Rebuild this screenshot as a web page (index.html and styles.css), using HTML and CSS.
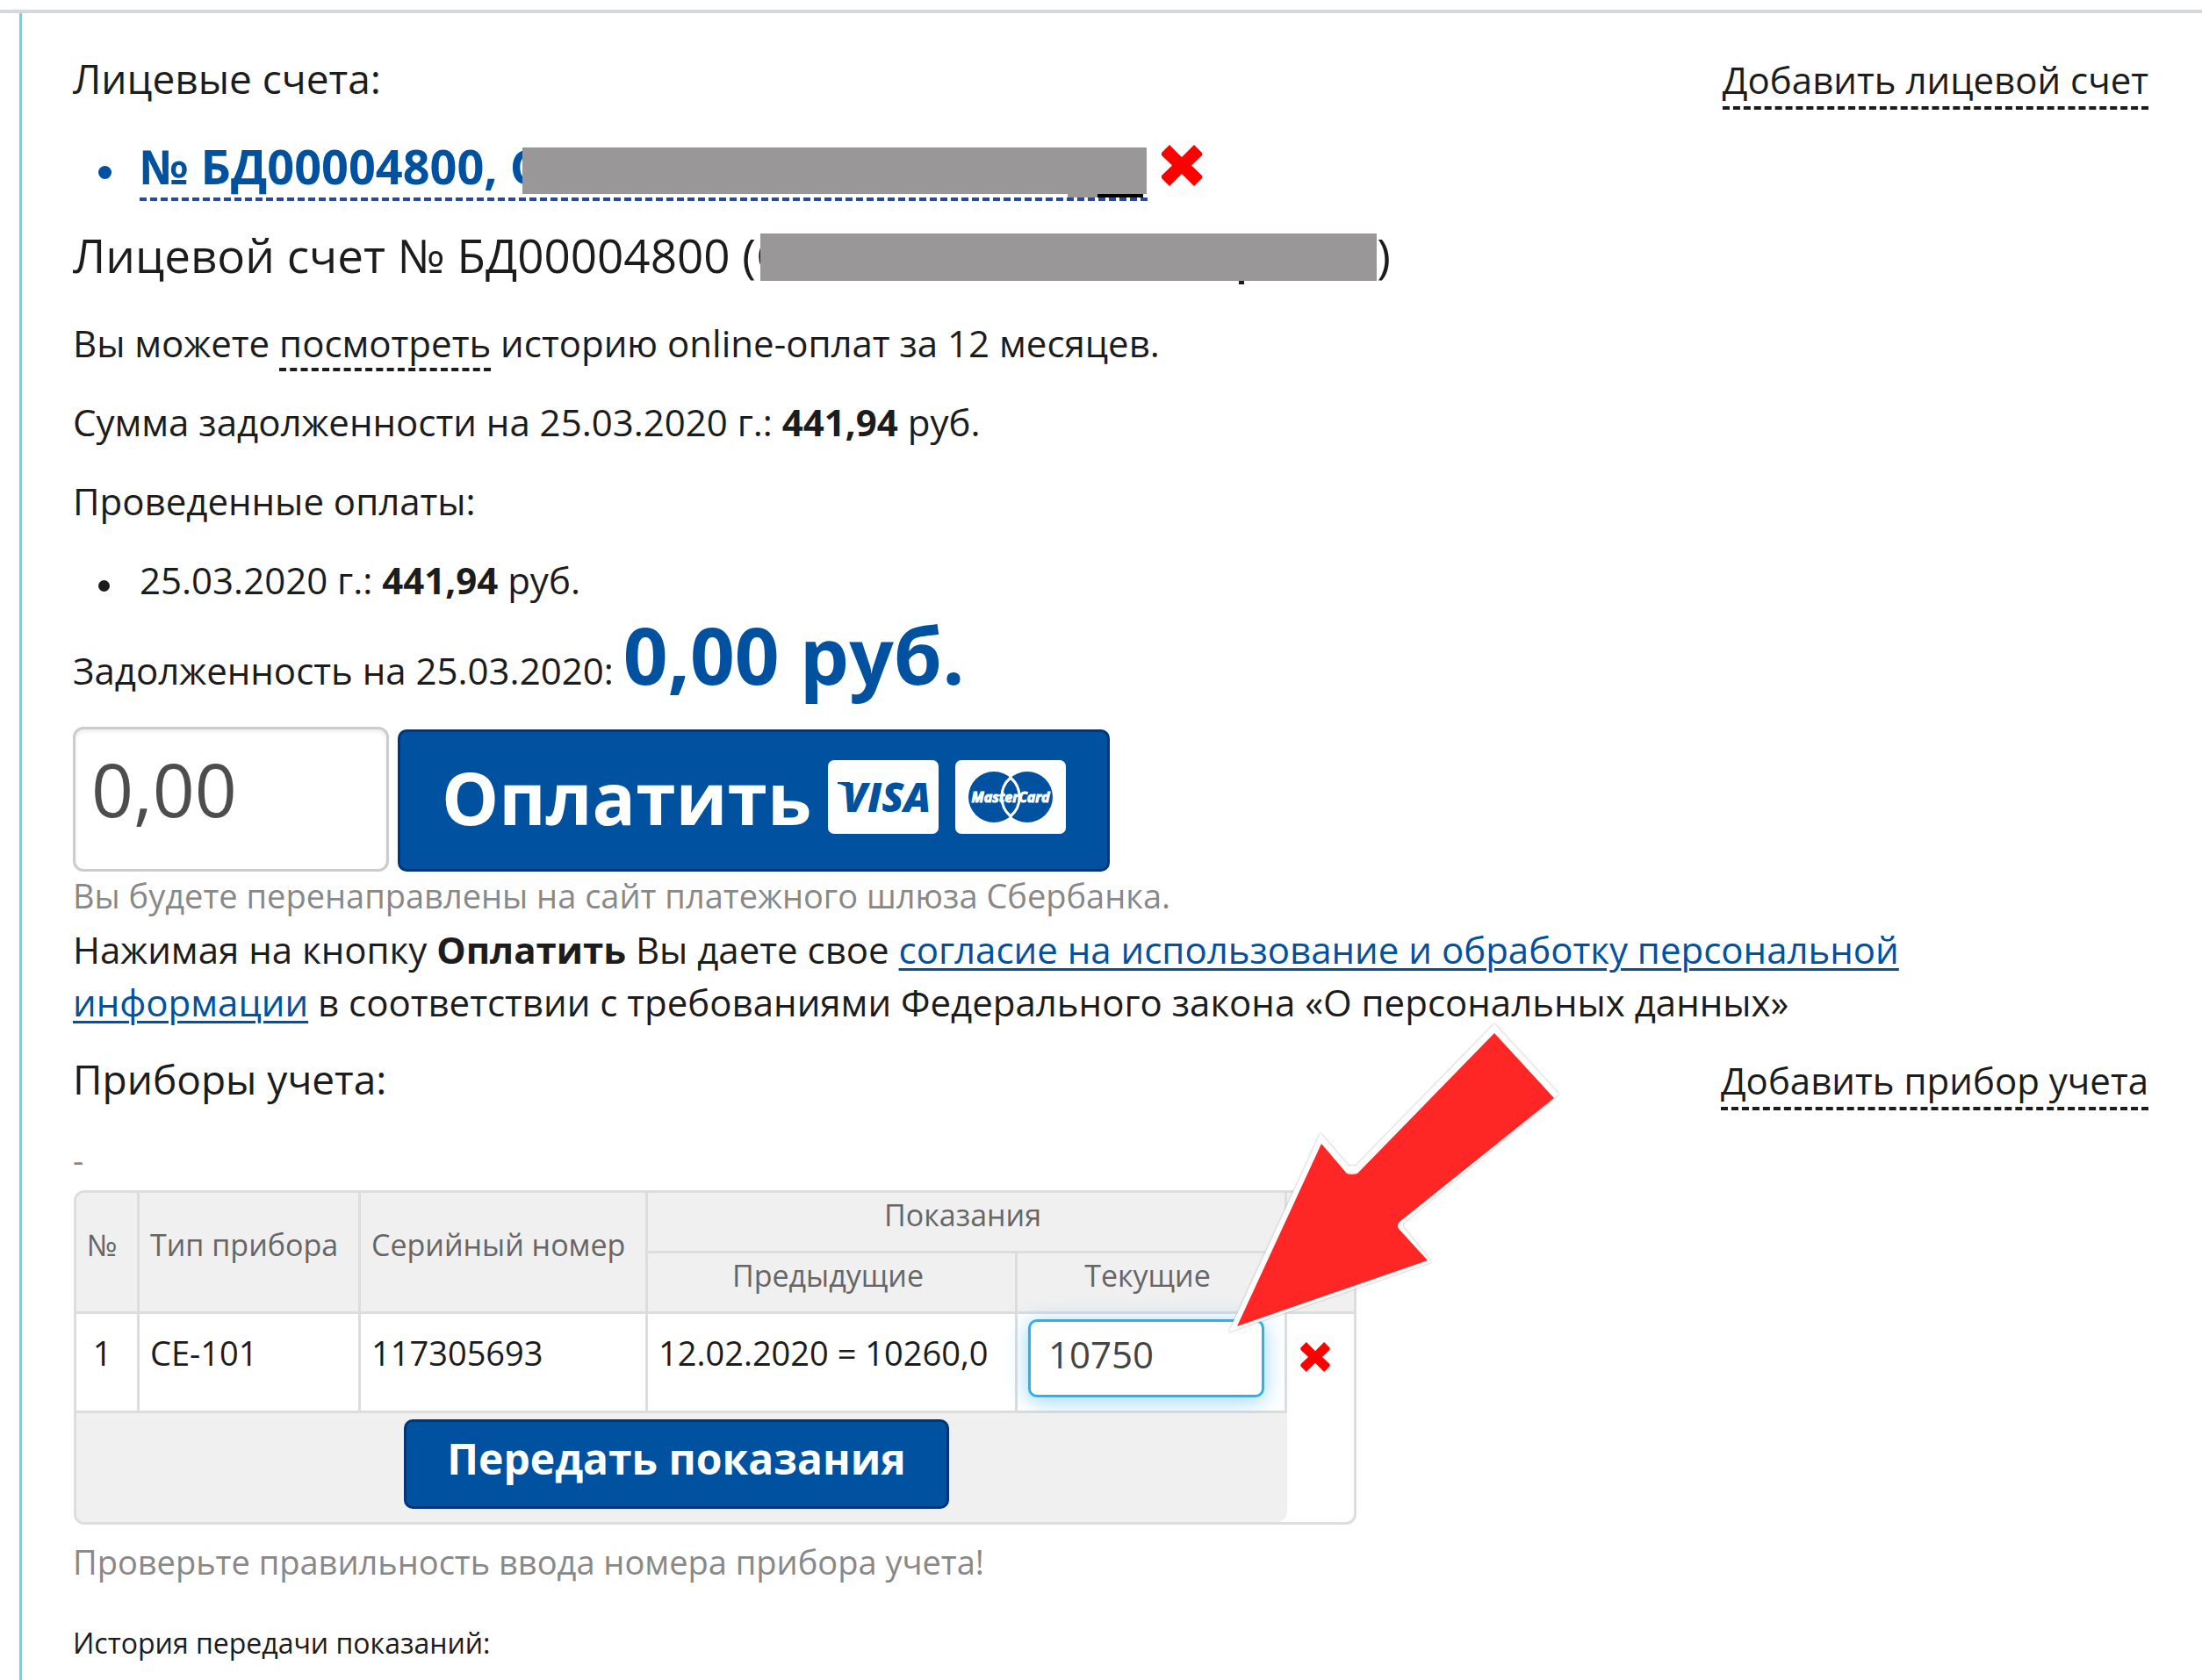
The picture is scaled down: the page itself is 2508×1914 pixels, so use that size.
FILE: index.html
```
<!DOCTYPE html>
<html lang="ru">
<head>
<meta charset="utf-8">
<title>Лицевой счет</title>
<link rel="stylesheet" href="styles.css">
</head>
<body>
<header class="topbar"></header>
<main class="cabinet">
  <section class="accounts">
    <div class="section-head">
      <h2 class="section-title">Лицевые счета:</h2>
      <a class="dashed-link" href="#add-account">Добавить лицевой счет</a>
    </div>
    <ul class="list account-list">
      <li class="list-item account-item">
        <a class="account-link" href="#account">№ БД00004800, С<span class="mask mask-link"></span></a>
        <button class="icon-button" type="button" aria-label="Удалить лицевой счет">
          <svg class="cross cross-large" viewBox="0 0 46 47"><path d="M9 0 0 9v3l12 11.500L0 35v3l9 9 14-14 14 14 9-9v-3L34 23.500 46 12V9L37 0 23 14z"/></svg>
        </button>
      </li>
    </ul>
    <h1 class="account-title">Лицевой счет № БД00004800 (С<span class="mask mask-title"></span>)</h1>
    <p class="text">Вы можете <a class="dashed-link" href="#history">посмотреть</a> историю online-оплат за 12 месяцев.</p>
    <p class="text">Сумма задолженности на 25.03.2020 г.: <b>441,94</b> руб.</p>
    <p class="text">Проведенные оплаты:</p>
    <ul class="list">
      <li class="list-item text">25.03.2020 г.: <b>441,94</b> руб.</li>
    </ul>
    <p class="debt"><label for="sum">Задолженность на 25.03.2020:</label> <strong class="debt-sum">0,00 руб.</strong></p>
  </section>

  <form class="payment">
    <div class="payment-row">
      <input class="sum-input" id="sum" type="text" value="0,00">
      <button class="button pay-button" type="button">
        <span>Оплатить</span>
        <svg class="card" viewBox="0 0 126 84" role="img" aria-label="VISA">
          <rect width="126" height="84" rx="7" fill="#fff"/>
          <text class="visa" x="67" y="59" text-anchor="middle">VISA</text>
          <path d="M11 25h14l5 17c-4-8-10-14-19-15z" fill="#0052a0"/>
        </svg>
        <svg class="card" viewBox="0 0 126 84" role="img" aria-label="MasterCard">
          <rect width="126" height="84" rx="7" fill="#fff"/>
          <circle cx="44" cy="42" r="29" fill="#0052a0"/>
          <circle cx="82" cy="42" r="29" fill="#0052a0"/>
          <path d="M63 20a29 29 0 0 0 0 44 29 29 0 0 0 0-44z" fill="#0052a0" stroke="#fff" stroke-width="3"/>
          <text class="mastercard" x="63" y="48" text-anchor="middle">MasterCard</text>
        </svg>
      </button>
    </div>
    <p class="hint">Вы будете перенаправлены на сайт платежного шлюза Сбербанка.</p>
    <p class="consent">Нажимая на кнопку <b>Оплатить</b> Вы даете свое <a class="link" href="#consent">согласие на использование и обработку персональной информации</a> в соответствии с требованиями Федерального закона «О персональных данных»</p>
  </form>

  <section class="meters">
    <div class="section-head">
      <h2 class="section-title">Приборы учета:</h2>
      <a class="dashed-link" href="#add-meter">Добавить прибор учета</a>
    </div>
    <p class="hint meter-address">-</p>
    <form>
      <table class="meter-table">
        <colgroup>
          <col class="col-number"><col class="col-type"><col class="col-serial">
          <col class="col-previous"><col class="col-current"><col class="col-action">
        </colgroup>
        <thead>
          <tr>
            <th class="tall" rowspan="2" scope="col">№</th>
            <th class="tall" rowspan="2" scope="col">Тип прибора</th>
            <th class="tall" rowspan="2" scope="col">Серийный номер</th>
            <th class="group" colspan="2" scope="colgroup">Показания</th>
            <td class="head-action" rowspan="2"></td>
          </tr>
          <tr>
            <th class="group" scope="col">Предыдущие</th>
            <th class="group" scope="col" id="current">Текущие</th>
          </tr>
        </thead>
        <tbody>
          <tr class="reading">
            <td class="number">1</td>
            <td>СЕ-101</td>
            <td>117305693</td>
            <td>12.02.2020 = 10260,0</td>
            <td class="current"><input class="reading-input" type="text" value="10750" aria-labelledby="current"></td>
            <td class="action" rowspan="2">
              <button class="icon-button" type="button" aria-label="Удалить прибор">
                <svg class="cross cross-small" viewBox="0 0 46 47"><path d="M9 0 0 9v3l12 11.500L0 35v3l9 9 14-14 14 14 9-9v-3L34 23.500 46 12V9L37 0 23 14z"/></svg>
              </button>
            </td>
          </tr>
          <tr class="submit-row">
            <td class="submit" colspan="5"><button class="button send-button" type="button">Передать показания</button></td>
          </tr>
        </tbody>
      </table>
    </form>
    <p class="hint check-hint">Проверьте правильность ввода номера прибора учета!</p>
    <p class="history">История передачи показаний:</p>
    <svg class="arrow" viewBox="0 0 380 350" aria-hidden="true">
      <path class="arrow-halo" d="M303 2 371 76 195 222v7l30 37L8 341 106 128l29 34h12z"/>
      <path class="arrow-body" d="M303 7 371 81 195 222q-4 4 0 9l32 35L10 341 106 133l29 34q6 2 12 0z"/>
    </svg>
  </section>
</main>
</body>
</html>
```
FILE: styles.css
```
* { box-sizing: border-box; }

body {
  margin: 0;
  background: #fff;
  color: #1c1c1c;
  font: 42px/60px "Open Sans", "Noto Sans", sans-serif;
}

h1, h2, p, ul { margin: 0; padding: 0; font-weight: 400; }
b, strong { font-weight: 700; }
button, input { font-family: inherit; }

.topbar { height: 15px; border-bottom: 4px solid #d6d9dc; }

.cabinet {
  min-height: calc(100vh - 15px);
  margin-left: 22px;
  padding: 44px 61px 16px 58px;
  border-left: 3px solid #8cc8d4;
}

.section-head { display: flex; justify-content: space-between; align-items: baseline; }
.section-title { font-size: 46px; }

.dashed-link { color: inherit; text-decoration: none; border-bottom: 4px dashed #1c1c1c; }
.link { color: #0052a0; text-decoration-thickness: 3px; text-underline-offset: 5px; }

.list { list-style: none; }
.list-item { position: relative; padding-left: 76px; }
.list-item::before {
  content: "";
  position: absolute;
  left: 29px;
  top: 50%;
  width: 13px;
  height: 13px;
  border-radius: 50%;
  background: currentColor;
}

.account-list { margin-top: 32px; }
.account-item { display: flex; gap: 16px; color: #0052a0; }
.account-item::before { width: 15px; height: 15px; margin-top: -4px; }
.account-link {
  display: flex;
  align-items: flex-end;
  padding-bottom: 4px;
  color: #0052a0;
  border-bottom: 4px dashed #2b48a0;
  font-size: 54px;
  font-weight: 700;
  line-height: 64px;
  text-decoration: none;
  white-space: pre;
}
.mask { position: relative; background: #999797; }
.mask-link { width: 711px; height: 53px; margin: 0 1px 0 -20px; }
/* descenders left showing below the masked text */
.mask-link::after {
  content: "";
  position: absolute;
  right: 4px;
  top: 100%;
  width: 86px;
  height: 4px;
  background: linear-gradient(90deg, #999797 34px, #000 34px);
}
.mask-title { display: inline-block; width: 702px; height: 54px; margin-left: -28px; vertical-align: -9px; }
.mask-title::after {
  content: "";
  position: absolute;
  right: 151px;
  top: 100%;
  width: 6px;
  height: 4px;
  background: #1c1c1c;
}

.icon-button { align-self: flex-start; padding: 0; border: 0; background: none; line-height: 0; }
.account-item .icon-button { margin-top: 8px; }
.cross { fill: #f00; }
.cross-large { width: 46px; height: 47px; }
.cross-small { width: 34px; height: 34px; }

.account-title { margin-top: 26px; font-size: 53px; line-height: 72px; }
.text { margin-top: 30px; }
.account-title + .text { margin-top: 34px; }

.debt { margin-top: 5px; line-height: 100px; }
.debt-sum { color: #0052a0; font-size: 89px; }

.payment { margin-top: 14px; }
.payment-row { display: flex; align-items: flex-end; gap: 10px; }
.sum-input {
  width: 360px;
  height: 165px;
  padding: 0 16px 24px 18px;
  border: 3px solid #ccc;
  border-radius: 12px;
  color: #4d4d4d;
  font-size: 84px;
  box-shadow: inset 0 3px 4px #eee;
}
.button {
  border: 3px solid #00357a;
  border-radius: 10px;
  background: #0052a0;
  color: #fff;
  font-weight: 700;
}
.pay-button {
  display: flex;
  align-items: center;
  gap: 19px;
  height: 162px;
  padding: 0 47px 8px;
  font-size: 82px;
}
.card { width: 126px; height: 84px; }
.visa { fill: #0052a0; font: italic 800 46px "Open Sans", sans-serif; }
.mastercard { fill: #fff; stroke: #fff; stroke-width: 1; font: italic 700 16px "Open Sans", sans-serif; }

.hint { color: #888; font-size: 38px; line-height: 54px; }
.consent { margin-top: 5px; max-width: 2150px; }

.meters { position: relative; margin-top: 27px; }
.meter-address { margin-top: 29px; }

.meter-table {
  width: 1461px;
  margin: 8px 0 0 1px;
  table-layout: fixed;
  border: 3px solid #ddd;
  border-radius: 12px;
  border-spacing: 0;
  overflow: hidden;
}
.col-number { width: 72px; }
.col-type { width: 252px; }
.col-serial { width: 327px; }
.col-previous { width: 421px; }
.col-current { width: 307px; }
.col-action { width: 76px; }

.meter-table th, .meter-table td {
  padding: 0;
  border: solid #ddd;
  border-width: 0 3px 3px 0;
  text-align: left;
  vertical-align: top;
  white-space: nowrap;
}
.meter-table th, .meter-table .head-action {
  background: #f0f0f0;
  color: #666;
  font-size: 34px;
  font-weight: 400;
  line-height: 48px;
}
.meter-table .tall { padding: 0 0 18px 12px; vertical-align: middle; }
.meter-table .group { height: 69px; padding: 1px 8px 0 0; text-align: center; }
.meter-table .head-action { border-right: 0; }

.reading { height: 113px; font-size: 38px; line-height: 54px; }
.meter-table .reading td { padding: 17px 0 0 12px; }
.meter-table .reading .number { padding: 17px 10px 0 0; text-align: center; }
.meter-table .reading .current { padding-top: 6px; }
.meter-table .reading .action { padding: 24px 0 0 15px; border: 0; }
.reading-input {
  display: block;
  width: 269px;
  height: 89px;
  padding: 0 20px 10px;
  border: 3px solid #2bb0f2;
  border-radius: 10px;
  color: #444;
  font-size: 42px;
  box-shadow: 0 4px 24px #2bb0f280;
}
.submit-row { height: 124px; }
.meter-table .submit {
  padding: 7px 12px 0 0;
  border: 0;
  border-radius: 0 0 12px 0;
  background: #f0f0f0;
  text-align: center;
}
.send-button {
  display: inline-block;
  height: 102px;
  padding: 0 46px 14px;
  font-size: 48px;
  vertical-align: top;
}

.check-hint { margin-top: 15px; }
.history { margin-top: 44px; font-size: 32px; line-height: 44px; }

.arrow { position: absolute; left: 1316px; top: -29px; width: 380px; height: 350px; overflow: visible; }
.arrow-body { fill: #ff2626; }
.arrow-halo { fill: none; stroke: #fff; stroke-width: 8px; filter: drop-shadow(0 0 1px #aaa); }
```
